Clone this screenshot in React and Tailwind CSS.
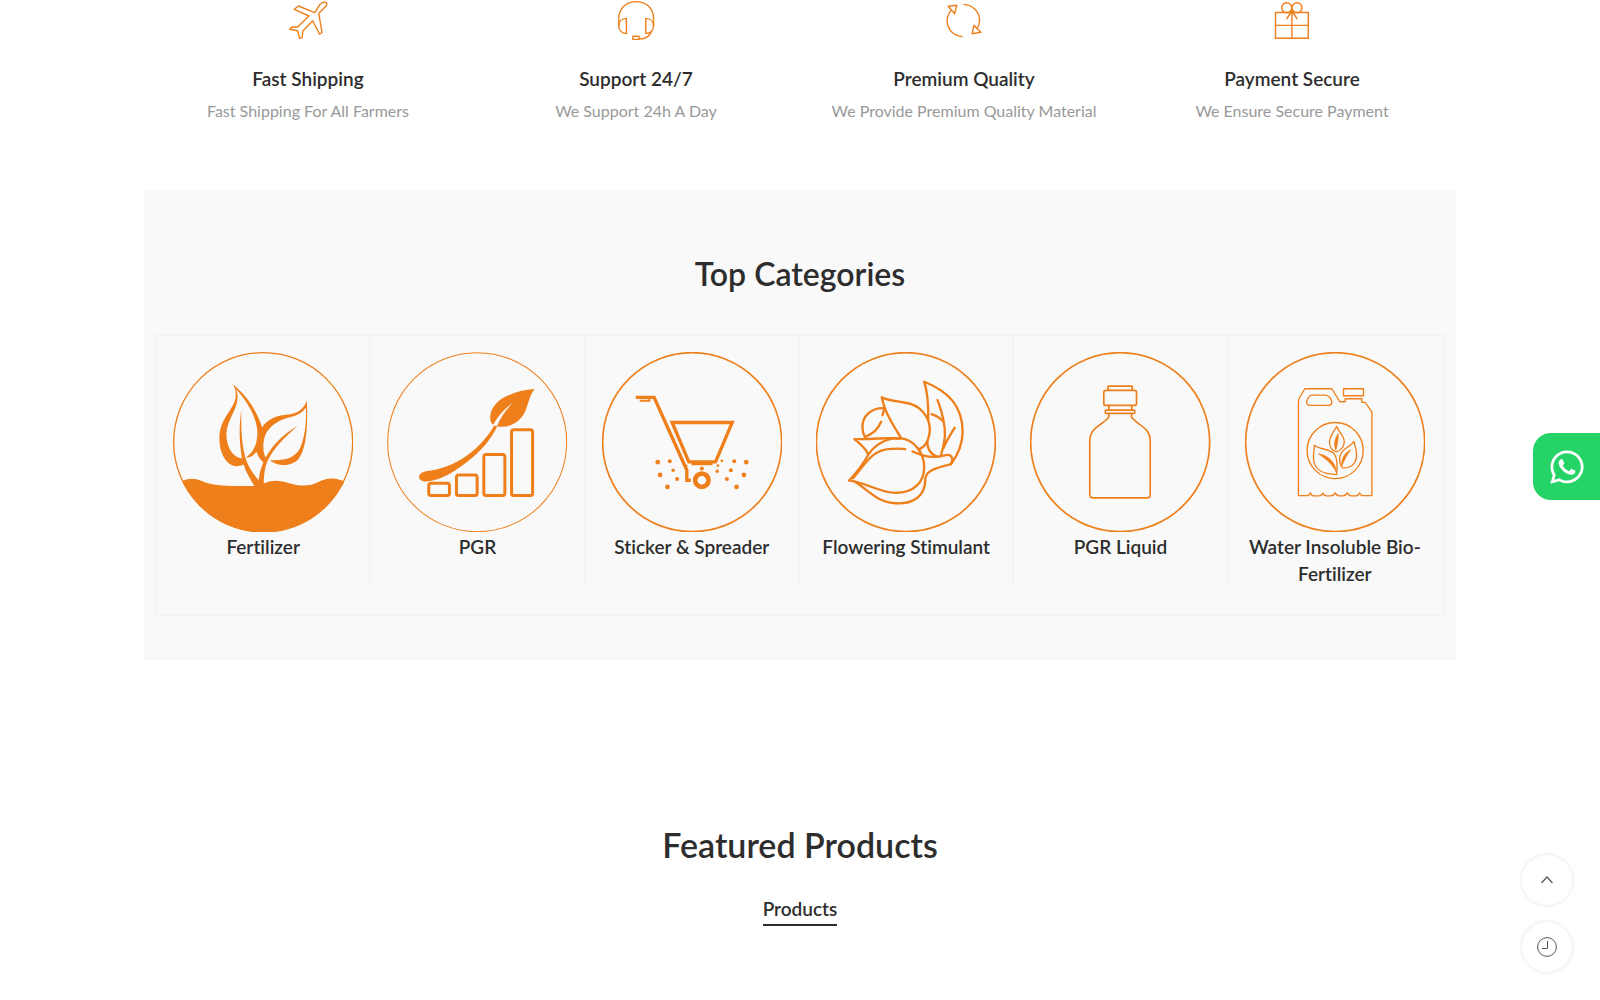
import { FaWhatsapp } from "react-icons/fa";

const ORANGE = "#ee7f1b";

function PlaneIcon() {
  return (
    <svg viewBox="0 0 40 40" className="size-10" fill="none" stroke={ORANGE} strokeWidth="1.4" strokeLinejoin="round">
      <path d="M26.7 12.7 10.4 6 6.3 9.3 21 16 9.6 27H3.8L1.8 29.2 9.6 30.7 11.6 38.3 14.2 37.5 14.9 31 24.7 20.7 31.6 34.3 34 32.5 30.8 13.3 37.8 6.2C39.4 4.4 38.8 2 37.4 2 34.6 1.9 33.4 2.8 32 4.4Z" />
    </svg>
  );
}

function HeadsetIcon() {
  return (
    <svg viewBox="0 0 40 40" className="size-10" fill="none" stroke={ORANGE} strokeWidth="1.4" strokeLinejoin="round">
      <path d="M2.8 26V18.5C2.8 8.6 10.2 1.6 20.2 1.6S37.6 8.6 37.6 18.5V26" />
      <path d="M10.4 18.4C5.6 18.6 2.8 21.8 2.8 26s2.8 7.4 7.6 7.6ZM29.8 18.4c4.8.2 7.8 3.4 7.8 7.6s-3 7.4-7.8 7.6Z" />
      <path d="M16.8 36.2h6.2v3.2h-6.2ZM23 39c6.6 0 11.4-2.8 13-9" />
    </svg>
  );
}

function RefreshIcon() {
  return (
    <svg viewBox="0 0 40 40" className="size-10" fill="none" stroke={ORANGE} strokeWidth="1.4" strokeLinejoin="round">
      <path d="M18.6 36.6C9.6 36 3.2 29.4 3.2 20.8c0-4 1.4-7.4 4-10.4M19.4 4.4C28.6 4.8 35.6 11.6 35.6 20.2c0 3.2-1 6.2-2.8 8.8" />
      <path d="M4.2 6.3 12.7 5.3 10.7 13.7ZM29.9 25.3 36.8 32.3 28.2 33.7Z" />
    </svg>
  );
}

function GiftIcon() {
  return (
    <svg viewBox="0 0 40 40" className="size-10" fill="none" stroke={ORANGE} strokeWidth="1.4">
      <path d="M3.5 12.5H36.3V38.3H3.5ZM19.9 10V38M3.5 25.4H36.3M19.9 11 14.6 19M19.9 11 25.2 19" />
      <circle cx="14.7" cy="7.8" r="5" />
      <circle cx="25" cy="7.8" r="5" />
    </svg>
  );
}

function FertilizerArt() {
  return (
    <svg viewBox="100 96 540 540" className="block w-full" fill={ORANGE}>
      <circle cx="370" cy="366" r="268" fill="none" stroke={ORANGE} strokeWidth="4" />
      <path d="M128 482C150 472 170 474 190 484 220 497 260 498 340 497L372 490C400 477 425 482 445 488 475 496 500 500 525 490 545 481 555 475 580 475 595 476 605 480 613 484A268 268 0 0 1 128 482Z" />
      <path d="M278 192C288 205 290 220 286 240 275 275 239 300 239 355 239 400 262 445 300 437 306 436 310 434 314 430L306 414C280 412 259 380 260 340 261 300 292 270 293 235 294 222 292 214 288 206 315 235 345 280 351 320 357 360 345 395 318 412 335 412 343 403 350 395 355 410 362 420 372 428L380 416C368 400 368 370 376 345 390 315 420 298 455 290 475 285 490 275 498 262 500 310 495 350 480 385 465 412 440 422 390 420 410 438 450 442 475 418 500 385 504 320 501 242 490 270 470 282 440 284 405 287 380 300 367 322 350 270 320 225 278 192Z" />
      <path d="M305 268C298 310 296 370 310 430 318 455 330 475 344 497H372C371 470 374 445 382 425 400 385 435 350 474 317 425 345 385 385 365 440 360 455 358 468 357 480 340 462 325 440 316 410 305 370 303 320 305 268Z" />
    </svg>
  );
}

function GrowthArt() {
  return (
    <svg viewBox="54 96 540 540" className="block w-full" fill={ORANGE}>
      <g fill="none" stroke={ORANGE}>
        <circle cx="324" cy="366" r="268" strokeWidth="3" />
        <g strokeWidth="9">
          <rect x="179" y="489" width="62" height="37" rx="7" />
          <rect x="262" y="464" width="62" height="62" rx="7" />
          <rect x="344" y="403" width="63" height="123" rx="7" />
          <rect x="427" y="329" width="63" height="197" rx="7" />
        </g>
      </g>
      <path d="M496 207C430 212 362 240 363 295 363 303 367 310 372 314 386 288 406 265 432 248 411 267 394 290 383 319 420 325 450 305 465 280 478 255 478 230 496 207Z" />
      <path d="M375 316C335 387 258 445 170 453 145 458 142 482 170 484 220 482 270 445 310 412 345 382 368 352 384 319Z" />
    </svg>
  );
}

const dots = [
  [219, 426, 7], [255, 423, 6], [226, 464, 7], [265, 450, 5], [277, 476, 6], [248, 500, 7],
  [304, 437, 4], [351, 445, 6], [411, 422, 4], [399, 436, 4], [397, 453, 5], [448, 423, 6],
  [484, 426, 7], [438, 450, 6], [477, 464, 7], [426, 476, 6], [455, 500, 7],
];

function SpreaderArt() {
  return (
    <svg viewBox="52 96 540 540" className="block w-full" fill={ORANGE}>
      <g fill="none" stroke={ORANGE} strokeWidth="10">
        <circle cx="322" cy="366" r="268" strokeWidth="5" />
        <path d="M153 232H208L306 450V480H318" />
        <path d="M165 242H194V232" strokeWidth="6" />
        <path d="M262 307H442L392 425H312Z" />
        <circle cx="351" cy="480" r="20" strokeWidth="14" />
      </g>
      <path d="M320 422H383V435H320Z" />
      {dots.map(([x, y, r]) => (
        <circle key={`${x}-${y}`} cx={x} cy={y} r={r} />
      ))}
    </svg>
  );
}

function FlowerArt() {
  return (
    <svg viewBox="51 96 540 540" className="block w-full" fill="none" stroke={ORANGE} strokeWidth="7" strokeLinecap="round" strokeLinejoin="round">
      <circle cx="320" cy="366" r="268" strokeWidth="5" />
      <path d="M387 300C388 260 386 220 375 185 450 215 490 260 490 335 490 375 475 405 455 432" />
      <path d="M305 352C285 320 258 280 248 232 285 250 330 240 360 265 395 295 397 330 385 362 379 375 370 383 362 386" />
      <path d="M255 264C215 262 190 290 190 320 190 335 194 345 198 352M256 264 250 285M246 305C235 330 222 340 199 350" />
      <path d="M303 355C260 352 205 358 166 357 185 372 200 385 207 402" />
      <path d="M150 481C180 450 196 425 210 400 230 372 260 355 300 354 345 356 375 400 375 440 375 490 340 518 290 518 240 518 200 485 150 481Z" />
      <path d="M162 474C200 430 220 385 280 386 295 385 308 385 318 387" />
      <path d="M165 483C210 510 230 545 290 549 345 552 378 525 378 480 378 455 395 447 455 432 462 420 462 412 452 405 448 402 435 405 420 409 385 412 365 405 340 394" />
      <path d="M360 386 364 402M384 364C384 385 395 402 413 409" />
      <path d="M415 240C430 280 438 310 437 345 436 370 430 385 425 407M397 282C415 288 425 295 434 307M466 323C450 350 440 365 432 385" />
    </svg>
  );
}

function BottleArt() {
  return (
    <svg viewBox="64 95 540 540" className="block w-full" fill="none" stroke={ORANGE} strokeWidth="5" strokeLinejoin="round">
      <circle cx="334" cy="365" r="268" />
      <path d="M298 210V197H370V210M300 256V269M369 256V269" />
      <rect x="285" y="210" width="98" height="45" rx="6" />
      <rect x="289" y="269" width="89" height="10" rx="4" />
      <path d="M300 280V290C285 312 243 320 243 360V522Q243 532 254 532H414Q424 532 424 522V360C424 320 382 312 368 290V280" />
    </svg>
  );
}

function CanArt() {
  return (
    <svg viewBox="78 96 540 540" className="block w-full" fill="none" stroke={ORANGE} strokeWidth="4" strokeLinejoin="round">
      <circle cx="348" cy="366" r="268" strokeWidth="5" />
      <path d="M257 206H338L362 245H378V236H428V247H438L458 276V526H432Q424 526 421 518 418 526 410 527H396Q388 526 384 518 380 526 372 527H360Q352 526 348 518 344 526 336 527H322Q314 526 311 518 308 526 300 527H284Q277 526 274 518 271 526 264 526H238V250C238 242 239 236 243 230Z" />
      <path d="M280 225H318C332 226 338 240 338 248 337 254 335 256 328 256H272C264 256 262 250 263 244 266 232 270 225 280 225Z" />
      <rect x="373" y="206" width="60" height="21" />
      <circle cx="348" cy="391" r="84" />
      <path d="M353 319C340 340 330 350 331 368 332 385 343 393 353 395 368 390 377 375 375 360 370 340 358 335 353 319Z" />
      <path d="M286 375C300 388 330 385 345 400 355 415 356 435 352 463 310 462 285 450 283 415 282 400 285 390 286 375Z" />
      <path d="M404 364C395 380 365 385 362 410 360 425 363 435 370 443 400 445 414 425 412 400 412 388 407 378 404 364Z" />
      <path fill={ORANGE} strokeWidth="2" d="M357 340C348 355 342 370 350 390 354 375 358 360 357 340ZM298 401C325 405 350 425 352 458 342 435 325 420 298 401ZM395 389C378 397 365 415 368 438 375 420 382 405 395 389Z" />
    </svg>
  );
}

const features = [
  { title: "Fast Shipping", text: "Fast Shipping For All Farmers", Icon: PlaneIcon },
  { title: "Support 24/7", text: "We Support 24h A Day", Icon: HeadsetIcon },
  { title: "Premium Quality", text: "We Provide Premium Quality Material", Icon: RefreshIcon },
  { title: "Payment Secure", text: "We Ensure Secure Payment", Icon: GiftIcon },
];

const categories = [
  { name: "Fertilizer", Art: FertilizerArt },
  { name: "PGR", Art: GrowthArt },
  { name: "Sticker & Spreader", Art: SpreaderArt },
  { name: "Flowering Stimulant", Art: FlowerArt },
  { name: "PGR Liquid", Art: BottleArt },
  { name: "Water Insoluble Bio-Fertilizer", Art: CanArt },
];

export default function App() {
  return (
    <div className="min-h-screen bg-white font-['Lato',sans-serif] text-[#2d2d2d] [font-variant-ligatures:none]">
      <main className="mx-auto w-[82%]">
        <section className="grid grid-cols-4">
          {features.map(({ title, text, Icon }) => (
            <div key={title} className="flex flex-col items-center text-center">
              <Icon />
              <h3 className="mt-[23px] text-[19px] leading-8 font-semibold">{title}</h3>
              <p className="text-base leading-8 text-[#999999]">{text}</p>
            </div>
          ))}
        </section>

        <section className="mt-[63px] bg-[#f9f9f9] px-[11px] pt-16 pb-11">
          <h2 className="text-center text-[32px] leading-10 font-semibold">Top Categories</h2>
          <div className="mt-10 grid grid-cols-6 border-2 border-[#f4f4f4] pb-[27px]">
            {categories.map(({ name, Art }) => (
              <a
                key={name}
                href="#"
                className="border-r-2 border-[#f4f4f4] px-4 pt-4 text-center last:border-transparent"
              >
                <Art />
                <h3 className="pt-px text-[19px] leading-[27px] font-semibold">{name}</h3>
              </a>
            ))}
          </div>
        </section>

        <section className="mt-40 flex flex-col items-center pt-[3px]">
          <h2 className="text-[34px] leading-[44px] font-semibold">Featured Products</h2>
          <button type="button" className="mt-[27px] border-b-2 border-[#2d2d2d] text-[19px] leading-[30px] font-semibold">
            Products
          </button>
        </section>
      </main>

      <a
        href="#"
        aria-label="WhatsApp"
        className="fixed top-[433px] right-0 flex h-[67px] w-[67px] items-center justify-center rounded-l-[18px] bg-[#25d366] text-white"
      >
        <FaWhatsapp size={38} />
      </a>

      <div className="fixed right-7 bottom-7 flex flex-col gap-[17px]">
        <button
          type="button"
          aria-label="Back to top"
          className="flex size-[50px] items-center justify-center rounded-full bg-white shadow-[0_0_4px_rgba(0,0,0,0.12)]"
        >
          <svg viewBox="0 0 20 20" className="size-5" fill="none" stroke="#555555" strokeWidth="1.2">
            <path d="M4.5 13 10 7 15.5 13" />
          </svg>
        </button>
        <button
          type="button"
          aria-label="Recently viewed"
          className="flex size-[50px] items-center justify-center rounded-full bg-white shadow-[0_0_4px_rgba(0,0,0,0.12)]"
        >
          <svg viewBox="0 0 20 20" className="size-5" fill="none" stroke="#555555">
            <circle cx="10" cy="10" r="9.4" />
            <path d="M10.5 4V11.5H5" />
          </svg>
        </button>
      </div>
    </div>
  );
}
